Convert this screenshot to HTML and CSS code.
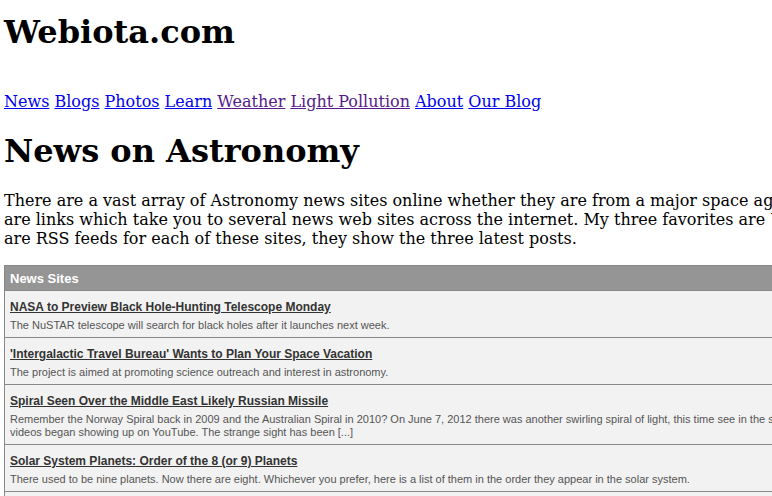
FILE: index.html
```html
<!DOCTYPE html>
<html>
<head>
<meta charset="utf-8">
<title>Webiota.com - News on Astronomy</title>
<link rel="stylesheet" href="styles.css">
</head>
<body>
<div class="page">
  <h1 class="site-title">Webiota.com</h1>
  <nav class="nav">
    <a href="#">News</a>
    <a href="#">Blogs</a>
    <a href="#">Photos</a>
    <a href="#">Learn</a>
    <a href="#" class="visited">Weather</a>
    <a href="#" class="visited">Light Pollution</a>
    <a href="#">About</a>
    <a href="#">Our Blog</a>
  </nav>
  <h1 class="page-title">News on Astronomy</h1>
  <p class="intro">There are a vast array of Astronomy news sites online whether they are from a major space agency or a small blog. Below<br>are links which take you to several news web sites across the internet. My three favorites are Universe Today, NASA and Below<br>are RSS feeds for each of these sites, they show the three latest posts.</p>

  <table class="feed">
    <thead>
      <tr><th colspan="2">News Sites</th></tr>
    </thead>
    <tbody>
      <tr><td colspan="2">
        <a href="#" class="item-title">NASA to Preview Black Hole-Hunting Telescope Monday</a>
        <div class="item-desc">The NuSTAR telescope will search for black holes after it launches next week.</div>
      </td></tr>
      <tr><td colspan="2">
        <a href="#" class="item-title">'Intergalactic Travel Bureau' Wants to Plan Your Space Vacation</a>
        <div class="item-desc">The project is aimed at promoting science outreach and interest in astronomy.</div>
      </td></tr>
      <tr><td colspan="2">
        <a href="#" class="item-title">Spiral Seen Over the Middle East Likely Russian Missile</a>
        <div class="item-desc">Remember the Norway Spiral back in 2009 and the Australian Spiral in 2010? On June 7, 2012 there was another swirling spiral of light, this time see in the skies over the Middle East.<br>videos began showing up on YouTube. The strange sight has been [...]</div>
      </td></tr>
      <tr><td colspan="2">
        <a href="#" class="item-title">Solar System Planets: Order of the 8 (or 9) Planets</a>
        <div class="item-desc">There used to be nine planets. Now there are eight. Whichever you prefer, here is a list of them in the order they appear in the solar system.</div>
      </td></tr>
      <tr><td colspan="2">
        <a href="#" class="item-title">Universe Today</a>
        <div class="item-desc">More news from around the universe.</div>
      </td></tr>
    </tbody>
  </table>
</div>
</body>
</html>
```

FILE: styles.css
```css
html {
  overflow: hidden;
}
body {
  margin: 0;
  background: #ffffff;
  color: #000000;
  font-family: "DejaVu Serif", serif;
}
.page {
  width: 1000px;
  padding: 0 4px;
}
.site-title {
  font-size: 32px;
  font-weight: bold;
  margin: 14px 0 0;
  line-height: 37px;
}
.nav {
  margin-top: 41px;
  font-size: 16px;
  line-height: 19px;
}
.nav a {
  color: #0000ee;
}
.nav a.visited {
  color: #551a8b;
}
.page-title {
  font-size: 32px;
  font-weight: bold;
  margin: 22px 0 0;
  line-height: 37px;
}
.intro {
  font-size: 16px;
  line-height: 19px;
  margin: 21px 0 0;
  white-space: nowrap;
}
.feed {
  margin-top: 17px;
  width: 100%;
  border-collapse: collapse;
  border: 1px solid #888888;
  font-family: "Liberation Sans", Arial, sans-serif;
}
.feed th {
  background: #959595;
  color: #ffffff;
  text-align: left;
  font-size: 13px;
  font-weight: bold;
  padding: 5px 5px 4px;
  line-height: 15px;
  border-bottom: 1px solid #888888;
}
.feed td {
  background: #f2f2f2;
  padding: 6px 5px 5px;
  border-bottom: 1px solid #888888;
  vertical-align: top;
}
.item-title {
  display: inline-block;
  color: #333333;
  font-size: 12px;
  font-weight: bold;
  line-height: 14px;
  margin-bottom: 5px;
}
.item-desc {
  color: #555555;
  font-size: 11px;
  line-height: 13px;
  white-space: nowrap;
}
```
